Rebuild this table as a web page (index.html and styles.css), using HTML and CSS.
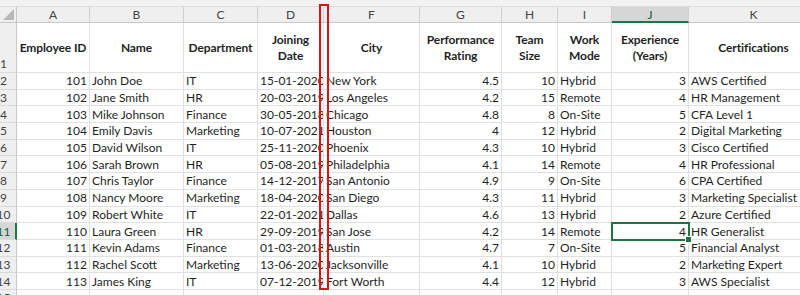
FILE: index.html
```html
<!DOCTYPE html>
<html>
<head>
<meta charset="utf-8">
<link rel="stylesheet" href="styles.css">
</head>
<body>
<div class="app">
  <div class="strip"></div>
  <div class="sheet">
    <div class="corner"><span class="tri"></span></div>
    <div class="ch">A</div><div class="ch">B</div><div class="ch">C</div><div class="ch">D</div><div class="ch">F</div><div class="ch">G</div><div class="ch">H</div><div class="ch">I</div><div class="ch sel">J</div><div class="ch">K</div>

    <div class="rh rh1"><span>1</span></div>
    <div class="c hd">Employee ID</div><div class="c hd">Name</div><div class="c hd">Department</div><div class="c hd">Joining<br>Date</div><div class="c hd">City</div><div class="c hd">Performance<br>Rating</div><div class="c hd">Team<br>Size</div><div class="c hd">Work<br>Mode</div><div class="c hd">Experience<br>(Years)</div><div class="c hd">Certifications</div>

    <div class="rh"><span>2</span></div>
    <div class="c n">101</div><div class="c">John Doe</div><div class="c">IT</div><div class="c">15-01-2020</div><div class="c">New York</div><div class="c n">4.5</div><div class="c n">10</div><div class="c">Hybrid</div><div class="c n">3</div><div class="c">AWS Certified</div>

    <div class="rh"><span>3</span></div>
    <div class="c n">102</div><div class="c">Jane Smith</div><div class="c">HR</div><div class="c">20-03-2019</div><div class="c">Los Angeles</div><div class="c n">4.2</div><div class="c n">15</div><div class="c">Remote</div><div class="c n">4</div><div class="c">HR Management</div>

    <div class="rh"><span>4</span></div>
    <div class="c n">103</div><div class="c">Mike Johnson</div><div class="c">Finance</div><div class="c">30-05-2018</div><div class="c">Chicago</div><div class="c n">4.8</div><div class="c n">8</div><div class="c">On-Site</div><div class="c n">5</div><div class="c">CFA Level 1</div>

    <div class="rh"><span>5</span></div>
    <div class="c n">104</div><div class="c">Emily Davis</div><div class="c">Marketing</div><div class="c">10-07-2021</div><div class="c">Houston</div><div class="c n">4</div><div class="c n">12</div><div class="c">Hybrid</div><div class="c n">2</div><div class="c">Digital Marketing</div>

    <div class="rh"><span>6</span></div>
    <div class="c n">105</div><div class="c">David Wilson</div><div class="c">IT</div><div class="c">25-11-2020</div><div class="c">Phoenix</div><div class="c n">4.3</div><div class="c n">10</div><div class="c">Hybrid</div><div class="c n">3</div><div class="c">Cisco Certified</div>

    <div class="rh"><span>7</span></div>
    <div class="c n">106</div><div class="c">Sarah Brown</div><div class="c">HR</div><div class="c">05-08-2019</div><div class="c">Philadelphia</div><div class="c n">4.1</div><div class="c n">14</div><div class="c">Remote</div><div class="c n">4</div><div class="c">HR Professional</div>

    <div class="rh"><span>8</span></div>
    <div class="c n">107</div><div class="c">Chris Taylor</div><div class="c">Finance</div><div class="c">14-12-2017</div><div class="c">San Antonio</div><div class="c n">4.9</div><div class="c n">9</div><div class="c">On-Site</div><div class="c n">6</div><div class="c">CPA Certified</div>

    <div class="rh"><span>9</span></div>
    <div class="c n">108</div><div class="c">Nancy Moore</div><div class="c">Marketing</div><div class="c">18-04-2020</div><div class="c">San Diego</div><div class="c n">4.3</div><div class="c n">11</div><div class="c">Hybrid</div><div class="c n">3</div><div class="c">Marketing Specialist</div>

    <div class="rh"><span>10</span></div>
    <div class="c n">109</div><div class="c">Robert White</div><div class="c">IT</div><div class="c">22-01-2021</div><div class="c">Dallas</div><div class="c n">4.6</div><div class="c n">13</div><div class="c">Hybrid</div><div class="c n">2</div><div class="c">Azure Certified</div>

    <div class="rh rsel"><span>11</span></div>
    <div class="c n">110</div><div class="c">Laura Green</div><div class="c">HR</div><div class="c">29-09-2019</div><div class="c">San Jose</div><div class="c n">4.2</div><div class="c n">14</div><div class="c">Remote</div><div class="c n active">4</div><div class="c">HR Generalist</div>

    <div class="rh"><span>12</span></div>
    <div class="c n">111</div><div class="c">Kevin Adams</div><div class="c">Finance</div><div class="c">01-03-2018</div><div class="c">Austin</div><div class="c n">4.7</div><div class="c n">7</div><div class="c">On-Site</div><div class="c n">5</div><div class="c">Financial Analyst</div>

    <div class="rh"><span>13</span></div>
    <div class="c n">112</div><div class="c">Rachel Scott</div><div class="c">Marketing</div><div class="c">13-06-2020</div><div class="c">Jacksonville</div><div class="c n">4.1</div><div class="c n">10</div><div class="c">Hybrid</div><div class="c n">2</div><div class="c">Marketing Expert</div>

    <div class="rh"><span>14</span></div>
    <div class="c n">113</div><div class="c">James King</div><div class="c">IT</div><div class="c">07-12-2019</div><div class="c">Fort Worth</div><div class="c n">4.4</div><div class="c n">12</div><div class="c">Hybrid</div><div class="c n">3</div><div class="c">AWS Specialist</div>

    <div class="rh"><span>15</span></div>
    <div class="c"></div><div class="c"></div><div class="c"></div><div class="c"></div><div class="c"></div><div class="c"></div><div class="c"></div><div class="c"></div><div class="c"></div><div class="c"></div>
  </div>
  <div class="mark"></div>
</div>
</body>
</html>
```

FILE: styles.css
```css
html, body {
  margin: 0;
  padding: 0;
  background: #ffffff;
  overflow: hidden;
}

.app {
  position: relative;
  width: 800px;
  height: 295px;
  overflow: hidden;
  font-family: Lato, "Open Sans", "Liberation Sans", sans-serif;
  font-size: 12px;
  color: #1f1f1f;
}

.strip {
  height: 7px;
  background: #f2f2f2;
  border-bottom: 1px solid #dcdcdc;
  box-sizing: border-box;
}

.sheet {
  display: grid;
  grid-template-columns: 17px 73px 94px 74px 66px 96px 82px 56px 54px 77px 130px;
  grid-template-rows: 16px 50px repeat(14, 16.7px);
  width: 819px;
}

.corner {
  background: #efefef;
  border-right: 1px solid #c8c8c8;
  border-bottom: 1px solid #c8c8c8;
  box-sizing: border-box;
  display: flex;
  justify-content: flex-end;
  align-items: flex-end;
  padding: 0 2px 2px 0;
}

.tri {
  width: 0;
  height: 0;
  border-left: 11px solid transparent;
  border-bottom: 11px solid #b9b9b9;
}

.ch {
  background: #efefef;
  border-right: 1px solid #d0d0d0;
  border-bottom: 1px solid #c8c8c8;
  box-sizing: border-box;
  display: flex;
  align-items: center;
  justify-content: center;
  color: #444444;
  font-size: 12px;
}

.ch.sel {
  background: #d6d6d6;
  border-bottom: 2px solid #217346;
  color: #1d5a37;
}

.rh {
  background: #efefef;
  border-right: 1px solid #c8c8c8;
  border-bottom: 1px solid #dadada;
  box-sizing: border-box;
  overflow: hidden;
  display: flex;
  align-items: center;
  color: #444444;
  font-size: 12px;
}

.rh span {
  flex: none;
  width: 27px;
  margin-left: -10px;
  text-align: center;
}

.rh1 {
  align-items: flex-end;
  padding-bottom: 1px;
}

.rh.rsel {
  background: #d6d6d6;
  border-right: 2px solid #217346;
  color: #1d5a37;
}

.c {
  border-right: 1px solid #e1e1e1;
  border-bottom: 1px solid #e1e1e1;
  box-sizing: border-box;
  white-space: nowrap;
  overflow: hidden;
  display: flex;
  align-items: center;
  padding: 0 2px;
  position: relative;
}

.c.n {
  justify-content: flex-end;
}

.c.hd {
  font-weight: bold;
  justify-content: center;
  text-align: center;
  line-height: 16px;
  font-size: 12px;
  letter-spacing: -0.1px;
}

.c.active {
  overflow: visible;
  outline: 2px solid #217346;
  outline-offset: -1px;
  z-index: 2;
}

.c.active::after {
  content: "";
  position: absolute;
  right: -4px;
  bottom: -4px;
  width: 5px;
  height: 5px;
  background: #217346;
  border: 1px solid #ffffff;
}

.mark {
  position: absolute;
  left: 319px;
  top: 4px;
  width: 10px;
  height: 286px;
  border: 2px solid #d9141b;
  box-sizing: border-box;
  z-index: 5;
}
```
